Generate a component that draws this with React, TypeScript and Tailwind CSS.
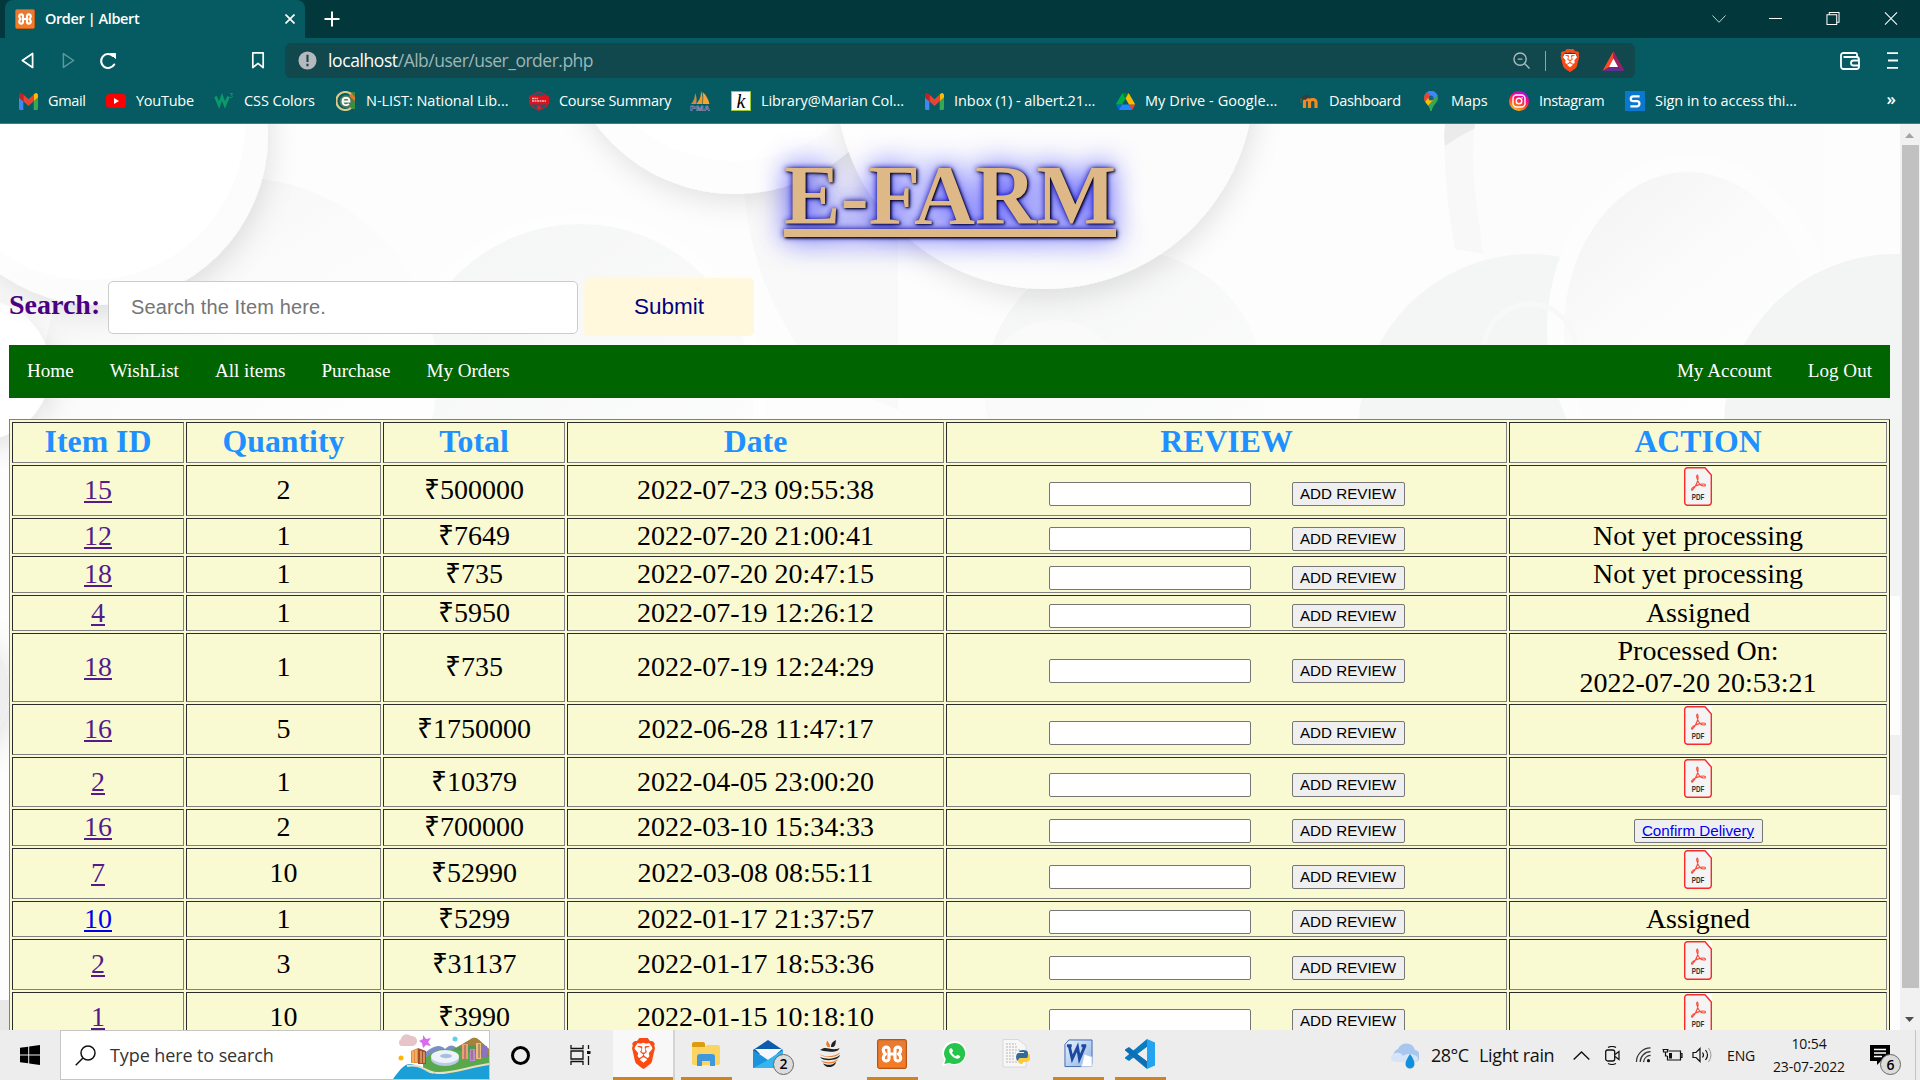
import React from "react";
import { SiBrave } from "react-icons/si";
import { FaWhatsapp } from "react-icons/fa";

const UI = "font-['Open_Sans','Noto_Sans',sans-serif]";
const SERIF = "font-['Liberation_Serif',serif]";
const SANS = "font-['Liberation_Sans',sans-serif]";

function GmailIcon() {
  return (
    <svg viewBox="52 42 88 66" className="h-[17px] w-[19px]" preserveAspectRatio="none">
      <path fill="#4285f4" d="M58 108h14V74L52 59v43c0 3.320 2.690 6 6 6" />
      <path fill="#34a853" d="M120 108h14c3.320 0 6-2.690 6-6V59l-20 15" />
      <path fill="#fbbc04" d="M120 48v26l20-15v-8c0-7.420-8.470-11.650-14.400-7.200" />
      <path fill="#ea4335" d="M72 74V48l24 18 24-18v26L96 92" />
      <path fill="#c5221f" d="M52 51v8l20 15V48l-5.600-4.200c-5.940-4.450-14.400-.220-14.400 7.200" />
    </svg>
  );
}

function YouTubeIcon() {
  return (
    <svg viewBox="0 0 20 14" className="h-[14px] w-[20px]">
      <rect width="20" height="14" rx="3.500" fill="#f00" />
      <path d="M8 4l5 3-5 3z" fill="#fff" />
    </svg>
  );
}

function W3Icon() {
  return (
    <svg viewBox="0 0 20 20" className="h-5 w-5">
      <path d="M1.500 5.500L5 14l3-8 3 8 3.500-8.500" fill="none" stroke="#0a9b6a" strokeWidth="2.800" />
      <path d="M16 2.500h2.500l-1.200 1.800c2 0 2 2.700-1.500 2.200" fill="none" stroke="#0a9b6a" strokeWidth=".9" />
    </svg>
  );
}

function NListIcon() {
  return (
    <svg viewBox="0 0 20 20" className="h-5 w-5">
      <path d="M13 1h5a1 1 0 011 1v16h-6z" fill="#3d8c40" />
      <path d="M14 1l5 5v4l-5-4z" fill="#e8742c" />
      <path d="M15 3a9 9 0 100 14" fill="none" stroke="#d8c98c" strokeWidth="2.200" />
      <circle cx="10" cy="10.500" r="6.500" fill="#4b7d58" />
      <path d="M6.500 10.500h7c0-5-7-5-7 0 0 4 4 4.500 6.500 2.500" fill="none" stroke="#fff" strokeWidth="1.800" />
    </svg>
  );
}

function CourseIcon() {
  return (
    <svg viewBox="0 0 20 20" className="h-5 w-5">
      <path d="M10 .6l8 4.200v10.400L10 19.400l-8-4.200V4.800z" fill="#27536b" stroke="#c8202a" strokeWidth="1" />
      <rect x="0" y="4.500" width="20" height="9" rx="1" fill="#d6151f" />
      <path d="M3 7.500h6M3 10h14" stroke="#f3b6b8" strokeWidth="1.300" strokeDasharray="2 .5" />
      <circle cx="10" cy="16.500" r="2" fill="#e0212b" />
    </svg>
  );
}

function PmaIcon() {
  return (
    <svg viewBox="0 0 20 20" className="h-5 w-5">
      <path d="M1 13C4 10 5 6 5 2c2 4 2 8 1 11z" fill="#c98a4a" />
      <path d="M6 13c4-4 5-8 5-13 2 4 2 9 1 13z" fill="#f19a2a" />
      <path d="M12.500 13c1-4 1-8 0-12 4 3 6 8 7 12z" fill="#f7a335" />
      <text x="0" y="19.500" fontSize="8" fontWeight="bold" fontFamily="Liberation Sans" textLength="20" lengthAdjust="spacingAndGlyphs" fill="#34346e" stroke="#b9b9d8" strokeWidth=".4">PMA</text>
    </svg>
  );
}

function KohaIcon() {
  return (
    <div className="flex h-5 w-5 items-center justify-center border border-[#9acd32] bg-white">
      <span className={`${SERIF} text-[20px] leading-none text-black italic`}>k</span>
    </div>
  );
}

function DriveIcon() {
  return (
    <svg viewBox="0 0 87.300 78" className="h-[17px] w-[19px]">
      <path d="m6.600 66.850 3.850 6.650c.8 1.400 1.950 2.500 3.300 3.300l13.750-23.800h-27.500c0 1.550.4 3.100 1.200 4.500z" fill="#0066da" />
      <path d="m43.650 25-13.750-23.800c-1.350.8-2.500 1.900-3.300 3.300l-25.400 44a9.060 9.060 0 0 0 -1.200 4.500h27.500z" fill="#00ac47" />
      <path d="m73.550 76.800c1.350-.8 2.500-1.900 3.300-3.300l1.600-2.750 7.650-13.250c.8-1.400 1.200-2.950 1.200-4.500h-27.500l5.850 11.500z" fill="#ea4335" />
      <path d="m43.650 25 13.750-23.800c-1.350-.8-2.900-1.200-4.500-1.200h-18.500c-1.600 0-3.150.45-4.500 1.200z" fill="#00832d" />
      <path d="m59.800 53h-32.300l-13.750 23.800c1.350.8 2.900 1.200 4.500 1.200h50.800c1.600 0 3.150-.45 4.500-1.200z" fill="#2684fc" />
      <path d="m73.400 26.500-12.700-22c-.8-1.400-1.950-2.500-3.300-3.300l-13.750 23.800 16.150 28h27.450c0-1.550-.4-3.100-1.200-4.500z" fill="#ffba00" />
    </svg>
  );
}

function MoodleIcon() {
  return (
    <svg viewBox="0 0 20 20" className="h-5 w-5">
      <path d="M5.500 17v-5.500c0-4 5-4 5 0V17m0-5.500c0-4 6.500-4 6.500 0V17" fill="none" stroke="#f08a24" strokeWidth="3.200" />
      <path d="M1 7l6-3.500 5 1L6.500 9z" fill="#3c3c3c" />
      <path d="M2 7v5" stroke="#7a5a3a" />
    </svg>
  );
}

function MapsIcon() {
  return (
    <svg viewBox="0 0 14 20" className="h-5 w-[14px]">
      <clipPath id="pin"><path d="M7 0a7 7 0 017 7c0 5-5.500 6.500-6.200 13H6.300C5.500 13.500 0 12 0 7a7 7 0 017-7z" /></clipPath>
      <g clipPath="url(#pin)">
        <rect width="14" height="20" fill="#34a853" />
        <path d="M0 0h14v5L7 7z" fill="#4285f4" />
        <path d="M0 0l3 0 4 7-6 6-1-2z" fill="#ea4335" />
        <path d="M7 7l6-7H4z" fill="#4285f4" />
        <path d="M0 12l5-6 4 3-7 8z" fill="#fbbc04" />
      </g>
      <circle cx="7" cy="7" r="2.500" fill="#1d5f8c" />
    </svg>
  );
}

function InstagramIcon() {
  return (
    <svg viewBox="0 0 20 20" className="h-5 w-5">
      <defs>
        <linearGradient id="ig" x1=".2" y1="1" x2=".7" y2="0">
          <stop offset="0" stopColor="#ffd21f" /><stop offset=".35" stopColor="#ff5a1f" /><stop offset=".65" stopColor="#ff0a78" /><stop offset="1" stopColor="#b400ff" />
        </linearGradient>
      </defs>
      <circle cx="10" cy="10" r="10" fill="url(#ig)" />
      <rect x="4" y="4" width="12" height="12" rx="3.500" fill="none" stroke="#fff" strokeWidth="1.400" />
      <circle cx="10" cy="10" r="2.800" fill="none" stroke="#fff" strokeWidth="1.400" />
      <circle cx="13.300" cy="6.700" r=".8" fill="#fff" />
    </svg>
  );
}

function SIcon() {
  return (
    <div className="flex h-5 w-5 items-center justify-center bg-[#0a78cf]">
      <svg viewBox="0 0 12 14" className="h-[13px] w-[12px]"><path d="M11 1.500H4a2.500 2.500 0 000 5.200h4a2.600 2.600 0 010 5.600H1" fill="none" stroke="#fff" strokeWidth="2.400" /></svg>
    </div>
  );
}

const bookmarks: { w: string; icon: React.ReactNode; label: string; t: string }[] = [
  { w: "w-[88px]", icon: <GmailIcon />, label: "Gmail", t: "tracking-[-0.35px]" },
  { w: "w-[108px]", icon: <YouTubeIcon />, label: "YouTube", t: "tracking-[-0.25px]" },
  { w: "w-[122px]", icon: <W3Icon />, label: "CSS Colors", t: "tracking-[-0.1px]" },
  { w: "w-[193px]", icon: <NListIcon />, label: "N-LIST: National Lib...", t: "tracking-[-0.03px]" },
  { w: "w-[161px]", icon: <CourseIcon />, label: "Course Summary", t: "tracking-[-0.3px]" },
  { w: "w-[41px]", icon: <PmaIcon />, label: "", t: "" },
  { w: "w-[193px]", icon: <KohaIcon />, label: "Library@Marian Col...", t: "tracking-[-0.08px]" },
  { w: "w-[191px]", icon: <GmailIcon />, label: "Inbox (1) - albert.21...", t: "tracking-[-0.05px]" },
  { w: "w-[184px]", icon: <DriveIcon />, label: "My Drive - Google...", t: "tracking-[0.08px]" },
  { w: "w-[122px]", icon: <MoodleIcon />, label: "Dashboard", t: "tracking-[-0.35px]" },
  { w: "w-[88px]", icon: <MapsIcon />, label: "Maps", t: "tracking-[-0.1px]" },
  { w: "w-[116px]", icon: <InstagramIcon />, label: "Instagram", t: "tracking-[-0.35px]" },
  { w: "w-[180px]", icon: <SIcon />, label: "Sign in to access thi...", t: "tracking-[-0.05px]" },
];

function BraveLogo({ className }: { className: string }) {
  return (
    <span className={`relative inline-block ${className}`}>
      <svg viewBox="0 0 24 24" className="absolute inset-0 h-full w-full"><path d="M6 5h12l2 4-3 9-5 4-5-4-3-9z" fill="#fff" /></svg>
      <SiBrave className="relative h-full w-full text-[#fb4a12]" preserveAspectRatio="none" />
    </span>
  );
}

function XamppLogo({ className }: { className: string }) {
  return (
    <span className={`relative inline-block overflow-hidden bg-gradient-to-b from-[#e57a35] to-[#f67c22] ${className}`}>
      <svg viewBox="0 0 30 30" className="absolute inset-0 h-full w-full">
        <rect x=".6" y=".6" width="28.800" height="28.800" rx="2" fill="none" stroke="#b55416" strokeWidth="1.200" />
        <path d="M12 18.500c.8 4.300-5.700 4.700-5.700.6 0-2 .8-3.100 2.200-4.100-1.400-1-2.200-2.100-2.200-4.100 0-4.100 6.500-3.700 5.700.6v3.500h6v-3.500c-.8-4.300 5.700-4.700 5.700-.6 0 2-.8 3.100-2.200 4.100 1.400 1 2.200 2.100 2.200 4.100 0 4.100-6.500 3.700-5.700-.6V15h-6z" fill="none" stroke="#fff" strokeWidth="3.200" strokeLinejoin="round" />
      </svg>
    </span>
  );
}

function BrowserChrome() {
  return (
    <header className={`${UI} flex h-[124px] shrink-0 flex-col border-b border-[#3b7f84] bg-[#055b61] text-white`}>
      <div className="flex h-[38px] shrink-0 items-end bg-[#02373c] pl-[5px]">
        <div className="flex h-[38px] w-[300px] items-center rounded-t-lg bg-[#055b61] pl-[10px]">
          <XamppLogo className="h-5 w-5 rounded-[3px]" />
          <span className="ml-[10px] w-[240px] text-[14.500px] font-semibold tracking-[-0.4px] whitespace-nowrap">Order | Albert</span>
          <svg viewBox="0 0 10 10" className="h-[10px] w-[10px]"><path d="M.5.5l9 9M9.500.5l-9 9" stroke="#fff" strokeWidth="1.700" /></svg>
        </div>
        <svg viewBox="0 0 16 16" className="mb-[11px] ml-[19px] h-4 w-4"><path d="M8 .5v15M.5 8h15" stroke="#fff" strokeWidth="2" /></svg>
        <div className="mb-[13px] ml-auto flex items-center pr-[22px]">
          <svg viewBox="0 0 14 8" className="h-2 w-[14px]"><path d="M.5.5L7 7.300 13.500.5" fill="none" stroke="#c4d2d3" /></svg>
          <div className="ml-[43px] h-px w-[13px] bg-white" />
          <svg viewBox="0 0 14 14" className="ml-[44px] h-[13px] w-[14px]"><path d="M.5 3h10.500v10.500H.5zM3 3V.5h10.500V11H11" fill="none" stroke="#fff" strokeWidth="1.100" /></svg>
          <svg viewBox="0 0 14 14" className="ml-[44px] h-[13px] w-[14px]"><path d="M.5.5l13 13M13.500.5l-13 13" stroke="#fff" strokeWidth="1.100" /></svg>
        </div>
      </div>
      <div className="flex h-[45px] shrink-0 items-center">
        <svg viewBox="0 0 14 18" className="ml-[21px] h-[17px] w-[13px]"><path d="M12.500 1.500v15L1.500 9z" fill="none" stroke="#fff" strokeWidth="1.900" strokeLinejoin="round" /></svg>
        <svg viewBox="0 0 14 18" className="ml-[28px] h-[17px] w-[13px]"><path d="M1.500 1.500v15L12.500 9z" fill="none" stroke="#5f989c" strokeWidth="1.600" strokeLinejoin="round" /></svg>
        <svg viewBox="0 0 18 18" className="ml-[24px] h-[18px] w-[18px]"><path d="M15.200 12.500A7 7 0 1114 4" fill="none" stroke="#fff" strokeWidth="2.100" strokeLinecap="round" /><path d="M11.500 1.500h5v5z" fill="#fff" stroke="#fff" strokeLinejoin="round" /></svg>
        <svg viewBox="0 0 14 18" className="ml-[134px] h-[17px] w-[14px]"><path d="M1.500 1h11v15.500L7 12l-5.500 4.500z" fill="none" stroke="#fff" strokeWidth="1.800" strokeLinejoin="round" /></svg>
        <div className="ml-[20px] flex h-[35px] w-[1350px] items-center rounded-md bg-[#10484e] pl-[13px]">
          <svg viewBox="0 0 20 20" className="h-[19px] w-[19px]"><circle cx="10" cy="10" r="9.500" fill="#b5b9bd" /><path d="M10 4v7.500M10 13.500v2.500" stroke="#10484e" strokeWidth="2.200" /></svg>
          <span className="ml-[11px] text-[17.500px] tracking-[-0.5px] whitespace-nowrap text-[#9db6b8]"><span className="tracking-[-0.4px] text-white">localhost</span>/Alb/user/user_order.php</span>
          <div className="ml-auto flex items-center pr-[10px]">
            <svg viewBox="0 0 18 18" className="h-[17px] w-[17px]"><circle cx="7.500" cy="7.500" r="6.500" fill="none" stroke="#a9bcbd" strokeWidth="1.500" /><path d="M12.500 12.500l5 5M5 7.500h5" stroke="#a9bcbd" strokeWidth="1.500" /></svg>
            <div className="ml-[15px] h-5 w-px bg-[#8ea6a8]" />
            <BraveLogo className="ml-[13px] h-[23px] w-[22px]" />
            <svg viewBox="0 0 22 20" className="ml-[21px] h-[20px] w-[23px]"><path d="M11 0L0 20l7-4 4-8z" fill="#ff4724" /><path d="M11 0l11 20-7-4-4-8z" fill="#9e1f63" /><path d="M0 20h22l-7-4H7z" fill="#662d91" /><path d="M11 7.500l4.500 8.500h-9z" fill="#fff" /></svg>
          </div>
        </div>
        <svg viewBox="0 0 20 18" className="ml-[205px] h-[18px] w-[20px]"><path d="M17 5V2.500A1.500 1.500 0 0015.500 1h-12A2.500 2.500 0 001 3.500v11A2.500 2.500 0 003.500 17h13A2.500 2.500 0 0019 14.500V7.500A2.500 2.500 0 0016.500 5H3.500M19 8.500h-5.500a2.500 2.500 0 000 5H19" fill="none" stroke="#fff" strokeWidth="1.800" /></svg>
        <svg viewBox="0 0 11 17" className="ml-[27px] h-[17px] w-[11px]"><path d="M0 1.200h11M1 8.500h10M0 15.800h11" stroke="#fff" strokeWidth="1.800" /></svg>
      </div>
      <div className="flex h-[36px] shrink-0 items-center pl-[18px] text-[14.500px] whitespace-nowrap">
        {bookmarks.map((b, i) => (
          <div key={i} className={`flex shrink-0 items-center ${b.w}`}>
            <div className="flex w-[20px] justify-center">{b.icon}</div>
            <span className={`ml-[10px] ${b.t}`}>{b.label}</span>
          </div>
        ))}
        <span className="mb-1 ml-auto pr-[24px] text-[17px] font-semibold">»</span>
      </div>
    </header>
  );
}

function PageBackdrop() {
  return (
    <svg viewBox="0 124 1900 906" className="absolute inset-0 h-full w-full" preserveAspectRatio="none">
      <defs>
        <filter id="soft" x="-20%" y="-20%" width="140%" height="140%"><feDropShadow dx="3" dy="8" stdDeviation="14" floodColor="#000" floodOpacity=".11" /></filter>
        <linearGradient id="disc" x1=".1" y1="0" x2=".6" y2=".8"><stop offset="0" stopColor="#f3f3f3" /><stop offset=".5" stopColor="#fbfbfb" /><stop offset="1" stopColor="#fefefe" /></linearGradient>
        <linearGradient id="fade" x1="0" y1="0" x2=".7" y2="1"><stop offset="0" stopColor="#f4f5f5" /><stop offset="1" stopColor="#fdfdfd" /></linearGradient>
        <linearGradient id="rim" x1="0" y1="0" x2="1" y2="1"><stop offset="0" stopColor="#fff" /><stop offset="1" stopColor="#fbfbfb" /></linearGradient>
      </defs>
      <rect y="124" width="1900" height="906" fill="#fdfdfd" />
      <circle cx="580" cy="400" r="186" fill="#fefefe" />
      <circle cx="580" cy="398" r="174" fill="url(#fade)" />
      <path d="M743 180c4 60 20 110 45 150 20 40 60 60 110 80V190z" fill="#f9f9f9" />
      <circle cx="240" cy="375" r="197" fill="url(#disc)" />
      <circle cx="-20" cy="370" r="70" fill="#fff" filter="url(#soft)" />
      <circle cx="98" cy="135" r="170" fill="url(#rim)" filter="url(#soft)" />
      <circle cx="90" cy="125" r="155" fill="#fff" />
      <circle cx="735" cy="20" r="174" fill="#fdfdfd" filter="url(#soft)" />
      <circle cx="735" cy="5" r="156" fill="#fff" />
      <circle cx="1130" cy="390" r="160" fill="#fdfdfd" />
      <circle cx="1125" cy="390" r="140" fill="url(#fade)" />
      <circle cx="1055" cy="390" r="70" fill="#fafafa" />
      <circle cx="1045" cy="80" r="209" fill="url(#rim)" filter="url(#soft)" />
      <path d="M1445 124c-2 45 3 85 10 125l60 10V124z" fill="#f8f8f8" />
      <path d="M1445 124c-1 10-1 14 0 22q20-14 40-22z" fill="#ebebeb" />
      <path d="M1475 124c-6 45 3 85 10 145l340 10V124z" fill="#fcfcfc" />
      <circle cx="1530" cy="425" r="171" fill="#f4f5f5" />
      <ellipse cx="1690" cy="330" rx="143" ry="175" fill="#fdfdfd" />
      <ellipse cx="1688" cy="330" rx="124" ry="158" fill="url(#disc)" />
      <circle cx="1895" cy="425" r="171" fill="#f3f4f4" />
      <circle cx="1530" cy="350" r="46" fill="none" stroke="#f8f8f8" strokeWidth="5" />
      <circle cx="-65" cy="690" r="74" fill="#eeeeee" filter="url(#soft)" />
      <rect x="1890" y="735" width="10" height="60" fill="#f0f0f0" />
      <rect x="0" y="1000" width="9" height="30" fill="#e8e8e8" />
    </svg>
  );
}

function PdfIcon() {
  return (
    <svg viewBox="0 0 28 39" className="block h-[39px] w-[28px]">
      <path d="M22 0h6v8z" fill="#fff" />
      <path d="M3.500.700H21L27.300 8v27.500a3 3 0 01-3 2.800H3.500A2.800 2.800 0 01.700 35.500v-32A2.800 2.800 0 013.500.700z" fill="#f4f4f4" stroke="#fb2a2a" strokeWidth="1.400" />
      <path d="M13.500 8c-2 0 0 6.500 2.500 9.500 3 2.500 6 1.500 5.500.5-1-2-9-.5-12.500 2.500-2.500 2-1.500 3.500 0 2 3-3.500 6.500-11 4.500-14.500z" fill="none" stroke="#fb4a3a" strokeWidth="1.100" />
      <text x="7.800" y="33.300" fontSize="8.500" fontWeight="bold" fontFamily="Liberation Sans" textLength="12.500" lengthAdjust="spacingAndGlyphs" fill="#333">PDF</text>
    </svg>
  );
}

type Row = { h: string; id: string; qty: string; total: string; date: string; action: string; fresh?: boolean };
const rows: Row[] = [
  { h: "h-[51px]", id: "15", qty: "2", total: "500000", date: "2022-07-23 09:55:38", action: "pdf" },
  { h: "h-[36px]", id: "12", qty: "1", total: "7649", date: "2022-07-20 21:00:41", action: "Not yet processing" },
  { h: "h-[37px]", id: "18", qty: "1", total: "735", date: "2022-07-20 20:47:15", action: "Not yet processing" },
  { h: "h-[36px]", id: "4", qty: "1", total: "5950", date: "2022-07-19 12:26:12", action: "Assigned" },
  { h: "h-[69px]", id: "18", qty: "1", total: "735", date: "2022-07-19 12:24:29", action: "Processed On:\n2022-07-20 20:53:21" },
  { h: "h-[51px]", id: "16", qty: "5", total: "1750000", date: "2022-06-28 11:47:17", action: "pdf" },
  { h: "h-[50px]", id: "2", qty: "1", total: "10379", date: "2022-04-05 23:00:20", action: "pdf" },
  { h: "h-[37px]", id: "16", qty: "2", total: "700000", date: "2022-03-10 15:34:33", action: "confirm" },
  { h: "h-[51px]", id: "7", qty: "10", total: "52990", date: "2022-03-08 08:55:11", action: "pdf" },
  { h: "h-[36px]", id: "10", qty: "1", total: "5299", date: "2022-01-17 21:37:57", action: "Assigned", fresh: true },
  { h: "h-[51px]", id: "2", qty: "3", total: "31137", date: "2022-01-17 18:53:36", action: "pdf" },
  { h: "h-[51px]", id: "1", qty: "10", total: "3990", date: "2022-01-15 10:18:10", action: "pdf" },
];

const CELL = "border border-t-[#2c2c2c] border-l-[#2c2c2c] border-r-[#808080] border-b-[#808080]";
const GRID = "grid grid-cols-[172px_195px_182px_377px_561px_378px] gap-x-[2px]";
const BUTTON = `${SANS} h-6 rounded-[2px] border border-[#767676] bg-[#efefef] text-[15.200px] leading-[22px] whitespace-nowrap`;

function Cell({ children }: { children: React.ReactNode }) {
  return <div role="cell" className={`${CELL} flex items-center justify-center pb-px text-center leading-[32px] whitespace-pre`}>{children}</div>;
}

function Action({ kind }: { kind: string }) {
  if (kind === "pdf") return <div className="self-start pt-px"><PdfIcon /></div>;
  if (kind === "confirm") return <button className={`${BUTTON} mt-[8px] w-[129px] text-[#0000ee] underline`}>Confirm Delivery</button>;
  return <>{kind}</>;
}

function OrderTable() {
  return (
    <div role="table" className="mt-[21px] flex w-[1881px] flex-col gap-[2px] border border-t-[#808080] border-l-[#808080] border-r-[#2c2c2c] border-b-[#2c2c2c] bg-[#fafad2] p-[2px] text-[28px] text-black">
      <div role="row" className={`${GRID} h-[41px] text-[31.800px] font-bold text-[#1e90ff]`}>
        {["Item ID", "Quantity", "Total", "Date", "REVIEW", "ACTION"].map((t) => <Cell key={t}>{t}</Cell>)}
      </div>
      {rows.map((r, i) => (
        <div role="row" key={i} className={`${GRID} ${r.h}`}>
          <Cell><a className={r.fresh ? "text-[#0000ee] underline" : "text-[#551a8b] underline"}>{r.id}</a></Cell>
          <Cell>{r.qty}</Cell>
          <Cell>₹{r.total}</Cell>
          <Cell>{r.date}</Cell>
          <Cell>
            <input className="mt-[7px] h-6 w-[202px] rounded-[2px] border border-[#767676] bg-white" />
            <button className={`${BUTTON} mt-[7px] ml-[41px] w-[113px]`}>ADD REVIEW</button>
          </Cell>
          <Cell><Action kind={r.action} /></Cell>
        </div>
      ))}
    </div>
  );
}

function FarmPage() {
  return (
    <div className="flex h-[906px] shrink-0">
      <main className={`${SERIF} relative h-[906px] w-[1900px] overflow-hidden`}>
        <PageBackdrop />
        <div className="relative flex flex-col pl-[9px]">
          <h1 className="h-[154px] w-[1882px] pt-[25px] text-center text-[84.600px] leading-[94px] font-bold text-[#deb887] underline [text-shadow:1.250px_1.250px_2.500px_black,0_0_31px_blue,0_0_6px_darkblue]">E-FARM</h1>
          <div className="flex h-[58px] items-center">
            <label className="-mt-1 w-[99px] text-[28px] font-bold text-[#4b0082]">Search:</label>
            <input placeholder="Search the Item here." className={`${SANS} h-[53px] w-[470px] rounded-[5px] border border-[#ccc] bg-white px-[22px] text-[20px] tracking-[0.12px] placeholder:text-[#757575]`} />
            <button className={`${SANS} ml-[6px] h-[58px] w-[170px] rounded-[5px] bg-[#fff8dc] text-[22.500px] text-[#000080]`}>Submit</button>
          </div>
          <nav className="mt-[9px] flex h-[53px] w-[1881px] items-center bg-[#006400] text-[19.100px] text-white">
            {["Home", "WishList", "All items", "Purchase", "My Orders"].map((t) => <a key={t} className="px-[18px]">{t}</a>)}
            <div className="ml-auto flex">
              <a className="px-[18px]">My Account</a>
              <a className="px-[18px]">Log Out</a>
            </div>
          </nav>
          <OrderTable />
        </div>
      </main>
      <div className="flex w-5 flex-col items-center bg-[#f1f1f1]">
        <svg viewBox="0 0 20 21" className="h-[21px] w-5"><path d="M5 14l4.500-5 4.500 5z" fill="#a3a3a3" /></svg>
        <div className="h-[843px] w-[17px] bg-[#c1c1c1]" />
        <svg viewBox="0 0 20 42" className="h-[42px] w-5"><path d="M5 29l4.500 5 4.500-5z" fill="#505050" /></svg>
      </div>
    </div>
  );
}

function CityArt() {
  return (
    <svg viewBox="0 0 96 48" className="h-[48px] w-[96px]">
      <path d="M30 24c8-8 16-12 22-6 6-6 10-4 14 2v16H30z" fill="#7c8fc4" />
      <path d="M40 30L78 8q4-3 8 1l10 9v30H40z" fill="#4f9a52" />
      <path d="M64 17L78 8q4-3 8 1l10 9v6L80 14z" fill="#a8823c" />
      <path d="M30 30q8-10 20-12l20 2 26 6v14q-40 8-66-1z" fill="#5aa84c" />
      <path d="M0 48c10-14 14-17 22-14 10 3 10 9 24 9 20 0 30-7 50-9v14z" fill="#1a9fd6" />
      <path d="M14 35c14-3 18 6 30 7s32-6 52-9" fill="none" stroke="#e8dfc4" strokeWidth="2" />
      <path d="M18 20l7-3v15h-7z" fill="#e58b3c" /><path d="M25 17l8 3v13h-8z" fill="#a34d2c" /><path d="M20 20v12M23 19v12M28 20v12M31 21v11" stroke="#ffd28a" />
      <ellipse cx="52" cy="28" rx="14" ry="7" fill="#b9cbe6" /><ellipse cx="52" cy="25.500" rx="14" ry="6.500" fill="#eef3fb" /><ellipse cx="53" cy="25" rx="6" ry="2.200" fill="#a8bfe0" />
      <path d="M69 13h6v15h-6z" fill="#e6a07c" /><path d="M77 18h5v12h-5z" fill="#b98bd0" /><path d="M83 12h5v16h-5z" fill="#e8c07c" /><path d="M89 15h5v11h-5z" fill="#8a74c0" />
      <path d="M72 14v14M86 13v14M79 19v10" stroke="#8a5a4a" />
      <path d="M8 15a4 4 0 010-7 6 6 0 0110-3 5 5 0 012 10z" fill="#e6c5c9" />
      <path d="M30 4l3 4 5-1-3 4 3 4-5-1-3 3-1-5-3-2 4-2z" fill="#d96bf0" />
      <circle cx="62" cy="8" r="2.500" fill="#5fd0e8" /><circle cx="8" cy="27" r="2.500" fill="#ffb400" />
    </svg>
  );
}

function TaskItem({ children, open, active }: { children: React.ReactNode; open?: boolean; active?: boolean }) {
  return (
    <div className={`flex w-[62px] flex-col items-center ${active ? "border-r-2 border-[#d4d4d4] bg-[#f8f8f8]" : ""}`}>
      <div className="flex h-[47px] items-center justify-center">{children}</div>
      {open && <div className={`h-[3px] bg-[#c98528] ${active ? "w-[60px]" : "w-[51px]"}`} />}
    </div>
  );
}

const BADGE = "absolute flex h-[21px] w-[21px] items-center justify-center rounded-full border border-[#666] bg-[#dcdcdc] text-[14px] leading-none font-semibold text-black";

function Taskbar() {
  return (
    <footer className={`${UI} flex h-[50px] shrink-0 bg-[#ededed] text-[#111]`}>
      <div className="flex w-[60px] items-center justify-center">
        <svg viewBox="0 0 20 20" className="h-5 w-5"><path d="M0 2.800L8.200 1.700v7.800H0zM9.200 1.500L20 0v9.500H9.200zM0 10.500h8.200v7.800L0 17.200zM9.200 10.500H20V20L9.200 18.500z" fill="#000" /></svg>
      </div>
      <div className="flex w-[430px] items-center border border-[#c6c6c6] bg-white pl-[14px]">
        <svg viewBox="0 0 21 21" className="h-[21px] w-[21px]"><circle cx="13" cy="8" r="7" fill="none" stroke="#111" strokeWidth="1.500" /><path d="M8 13L.7 20.300" stroke="#111" strokeWidth="1.500" /></svg>
        <span className="ml-[14px] text-[18px] tracking-[-0.1px] whitespace-nowrap text-[#333]">Type here to search</span>
        <div className="ml-auto"><CityArt /></div>
      </div>
      <div className="flex w-[60px] items-center justify-center">
        <div className="h-[19px] w-[19px] rounded-full border-[3px] border-black" />
      </div>
      <div className="flex w-[63px] items-center pl-5">
        <svg viewBox="0 0 21 20" className="h-[20px] w-[21px]"><path d="M1 0v3.500h12V0M1 20v-3.500h12V20M1 6h12v8H1zM18.500 0v4M18.500 11v9" fill="none" stroke="#111" strokeWidth="1.300" /><rect x="17" y="6" width="3.500" height="3" fill="#111" /></svg>
      </div>
      <TaskItem active open><BraveLogo className="h-[31px] w-[27px]" /></TaskItem>
      <TaskItem open>
        <svg viewBox="0 0 28 24" className="h-6 w-7"><path d="M0 2q0-2 2-2h9q2 0 2 2v3H0z" fill="#dc9c10" /><path d="M0 5h13l2-2h11q2 0 2 2v16q0 2-2 2H2q-2 0-2-2z" fill="#fcd462" /><path d="M5 24V15q0-3 3-3h12q3 0 3 3v9h-5v-5h-8v5z" fill="#3f97dc" /></svg>
      </TaskItem>
      <TaskItem>
        <div className="relative h-[28px] w-[30px]">
          <svg viewBox="0 0 30 28" className="h-[28px] w-[30px]"><path d="M0 10L15 0l15 10v4H0z" fill="#0c5cab" /><path d="M2 9h27L15 22z" fill="#f4f8fc" /><path d="M0 10l15 10L30 10v18H0z" fill="#1a93dc" /><path d="M0 28h30V10L15 20z" fill="#35b5f0" /></svg>
          <span className={`${BADGE} top-[14px] left-[20px]`}>2</span>
        </div>
      </TaskItem>
      <TaskItem>
        <svg viewBox="0 0 22 29" className="h-[29px] w-[22px]">
          <path d="M9 8C6.500 6 7 4 8.500 1.500 9 4 11.500 5 11 8z" fill="#f07820" />
          <path d="M12 8c0-3 1-5 5-7-.5 3 0 5-2.500 7z" fill="#222" />
          <path d="M1 11c3-2.500 6-2.500 9-1.500 4 1 8 1 10.500-.5-1 4-7 4-11 3.500-4-.5-6-.5-8.500-1.500z" fill="#222" />
          <path d="M0 15c7 3.500 15 3 21-1.500-2 5.500-16 6-21 1.500z" fill="#f07820" />
          <path d="M1 18c7 2.500 14 2.500 20-2-1 6-17 7-20 2z" fill="#222" />
          <path d="M2 21.500c6 2.500 12 2.500 17-1.500-2 5.500-14 6-17 1.500z" fill="#f07820" />
          <path d="M4 24.500c5 2 9 2 13-1.500-1 6-10 7-13 1.500z" fill="#222" />
        </svg>
      </TaskItem>
      <TaskItem open><XamppLogo className="h-[30px] w-[30px] rounded-[3px]" /></TaskItem>
      <TaskItem>
        <svg viewBox="0 0 28 28" className="h-[27px] w-[27px]">
          <path d="M14 1a12.500 12.500 0 11-6 23.500L1 27l2.500-6.500A12.500 12.500 0 0114 1z" fill="#fff" />
          <path d="M14 3a11 11 0 11-5.500 20.500L3.500 25l1.500-5A11 11 0 0114 3z" fill="#25c54c" />
          <path d="M10.200 8.500c-1.800.5-2.500 3-.7 5.700 2 3 4.500 5 7.500 5.200 1.700 0 3-1.200 3-2.500 0-.5-2.300-1.700-3-1.700-.6 0-1 1.400-1.600 1.400-1.200-.3-3.600-2.400-3.900-3.500 0-.6 1-1 1-1.700 0-.6-1-2.900-2.300-2.900z" fill="#fff" />
        </svg>
      </TaskItem>
      <TaskItem>
        <svg viewBox="0 0 28 29" className="h-[29px] w-[28px]"><path d="M1 .5h15l8 6V28H1z" fill="#f7f7f7" stroke="#d8d8d8" /><path d="M4 5h10M4 8h12M4 11h14M4 14h10M4 17h8M4 20h9M4 23h12" stroke="#b5b5b5" strokeDasharray="2 1" /><path d="M21 11q5 0 5 3v5h-7q-2 0-2 3-3 0-3-4t3-4h5v-1h-5q0-2 4-2z" fill="#34699c" /><path d="M20 25q-4 0-4-3 0-3 3-3h6q1-1 1-4 3 0 2 5-1 3-4 3h-3v1z" fill="#f8cc3c" /></svg>
      </TaskItem>
      <TaskItem open>
        <svg viewBox="0 0 30 29" className="h-[29px] w-[29px]"><defs><linearGradient id="wd" x1="0" y1="0" x2="1" y2="1"><stop offset="0" stopColor="#eaf2fc" /><stop offset="1" stopColor="#8fb3e6" /></linearGradient></defs><path d="M1 5l4-4.500h24v24L26 28H1z" fill="url(#wd)" stroke="#3f68b0" /><path d="M3 6.500h5M5.500 7l3 13L14 8l2 12 5.500-13M18 6.500h5" fill="none" stroke="#1c4aa0" strokeWidth="3" /><path d="M21 15l8 3v10h-11z" fill="#fff" stroke="#b8cce8" /></svg>
      </TaskItem>
      <TaskItem open>
        <svg viewBox="0 0 30 30" className="h-[30px] w-[30px]"><path d="M22 0v8L4 22 0 19.500v-1z" fill="#0a7cc4" /><path d="M0 11.500v-1L4 8l18 14v8z" fill="#0f6fb4" /><path d="M22 8v14l-9.500-7z" fill="#ededed" /><path d="M22 0l8 3.500v23L22 30z" fill="#24a4f0" /></svg>
      </TaskItem>
      <div className="ml-[220px] flex flex-1 items-center whitespace-nowrap">
        <svg viewBox="0 0 28 30" className="h-[30px] w-[28px]"><path d="M7 22a7 7 0 010-13 9 9 0 0117 1 6 6 0 01-2 12z" fill="#a9c6ee" /><path d="M0 18c1-6 10-7 12-2 5-4 14-1 15 2 0 3-2 4-5 4H6c-3 0-6-1-6-4z" fill="#d5e4f8" /><path d="M19 14c3 4 4.500 7 4.500 10a4.500 4.500 0 01-9 0c0-3 2-6 4.500-10z" fill="#1191dc" /></svg>
        <span className="ml-[12px] w-[48px] text-[18px] tracking-[-0.500px]">28°C</span>
        <span className="w-[94px] text-[18px] tracking-[-0.350px]">Light rain</span>
        <svg viewBox="0 0 17 9" className="h-[9px] w-[17px]"><path d="M.7 8.500L8.500 1l7.800 7.500" fill="none" stroke="#111" strokeWidth="1.400" /></svg>
        <svg viewBox="0 0 15 19" className="ml-[15px] h-[19px] w-[15px]"><rect x=".7" y="4" width="9" height="11" rx="2" fill="none" stroke="#111" strokeWidth="1.300" /><path d="M10 8.500l4-3v8l-4-3M3 1.500q4-2 8 0M3 17.500q4 2 8 0" fill="none" stroke="#111" strokeWidth="1.200" /></svg>
        <svg viewBox="0 0 17 17" className="ml-[15px] h-[16px] w-[17px]"><path d="M1 16A15 15 0 0116 1M5 16A11 11 0 0116 5M8.500 16A8 8 0 0116 9" fill="none" stroke="#333" strokeWidth="1.300" /><circle cx="13.800" cy="14.500" r="1.700" fill="#111" /></svg>
        <svg viewBox="0 0 20 14" className="ml-[10px] h-[14px] w-[21px]"><path d="M6 3h12v9H5V8M18 5.500h1.500v4H18" fill="none" stroke="#111" strokeWidth="1.200" /><rect x="6.500" y="5" width="3" height="5.500" fill="#111" /><path d="M1 1v3h4V1M0 1.500h6M3 4v4h2" fill="none" stroke="#111" strokeWidth="1.200" /></svg>
        <svg viewBox="0 0 21 16" className="ml-[9px] h-[16px] w-[21px]"><path d="M1 5.500h3l4-4v13l-4-4H1z" fill="none" stroke="#111" strokeWidth="1.200" /><path d="M10.500 5.500q2 2.500 0 5M13.500 3q4 5 0 10" fill="none" stroke="#111" strokeWidth="1.200" /><path d="M16.500 1q5 7 0 14" fill="none" stroke="#999" /></svg>
        <span className="ml-[14px] w-[36px] text-[14px] tracking-[-0.100px]">ENG</span>
        <div className="flex w-[92px] flex-col items-center text-[14px] leading-[23px] tracking-[-0.100px]"><span>10:54</span><span>23-07-2022</span></div>
        <div className="relative ml-[15px] h-[20px] w-5">
          <svg viewBox="0 0 20 20" className="h-5 w-5"><path d="M0 0h20v16h-9l-4 4v-4H0z" fill="#000" /><path d="M4 4.500h12M4 8h12M4 11.500h8" stroke="#fff" strokeWidth="1.300" /></svg>
          <span className={`${BADGE} top-[9px] left-[10px]`}>6</span>
        </div>
        <div className="mr-1 ml-auto h-[50px] w-px bg-[#c4c4c4]" />
      </div>
    </footer>
  );
}

export default function App() {
  return (
    <div className="flex h-[1080px] w-[1920px] flex-col overflow-hidden bg-white">
      <BrowserChrome />
      <FarmPage />
      <Taskbar />
    </div>
  );
}
